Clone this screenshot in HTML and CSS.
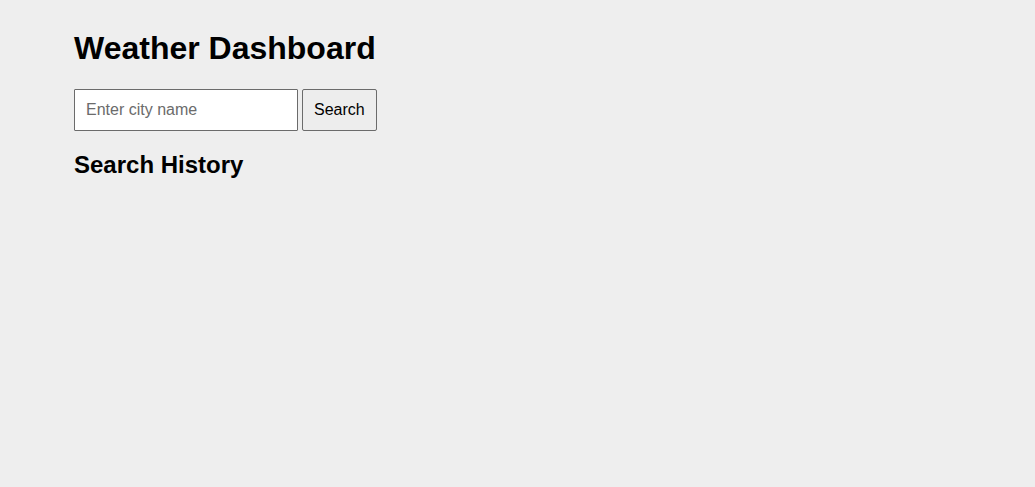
FILE: index.html
```html
<!DOCTYPE html>
<html lang="en">
<head>
<meta charset="utf-8">
<title>Weather Dashboard</title>
<link rel="stylesheet" href="styles.css">
</head>
<body class="page">
<main class="container">
<h1 class="title">Weather Dashboard</h1>
<form class="search-form">
<input class="search-input" type="text" placeholder="Enter city name" aria-label="City name">
<button class="search-button" type="submit">Search</button>
</form>
<h2 class="history-title">Search History</h2>
</main>
</body>
</html>
```

FILE: styles.css
```css
.page {
  margin: 0;
  background: #eeeeee;
  color: #000;
  font-family: "Liberation Sans", Arial, sans-serif;
}

.container {
  padding: 30px 74px 0;
}

.title {
  margin: 0 0 22px;
  font-size: 32px;
  line-height: 37px;
}

.search-form {
  display: flex;
  gap: 4px;
}

.search-input {
  box-sizing: border-box;
  width: 224px;
  padding: 10px 11px;
  border: 1px solid #6b6b6b;
  border-radius: 1px;
  background: #fff;
  font-family: inherit;
  font-size: 16px;
  line-height: 20px;
}

.search-input::placeholder {
  color: #6b6b6b;
}

.search-button {
  padding: 10px 11px;
  border: 1px solid #6b6b6b;
  border-radius: 2px;
  background: #ededed;
  color: #000;
  font-family: inherit;
  font-size: 16px;
  line-height: 20px;
}

.history-title {
  margin: 20px 0;
  font-size: 24px;
  line-height: 28px;
}
```
